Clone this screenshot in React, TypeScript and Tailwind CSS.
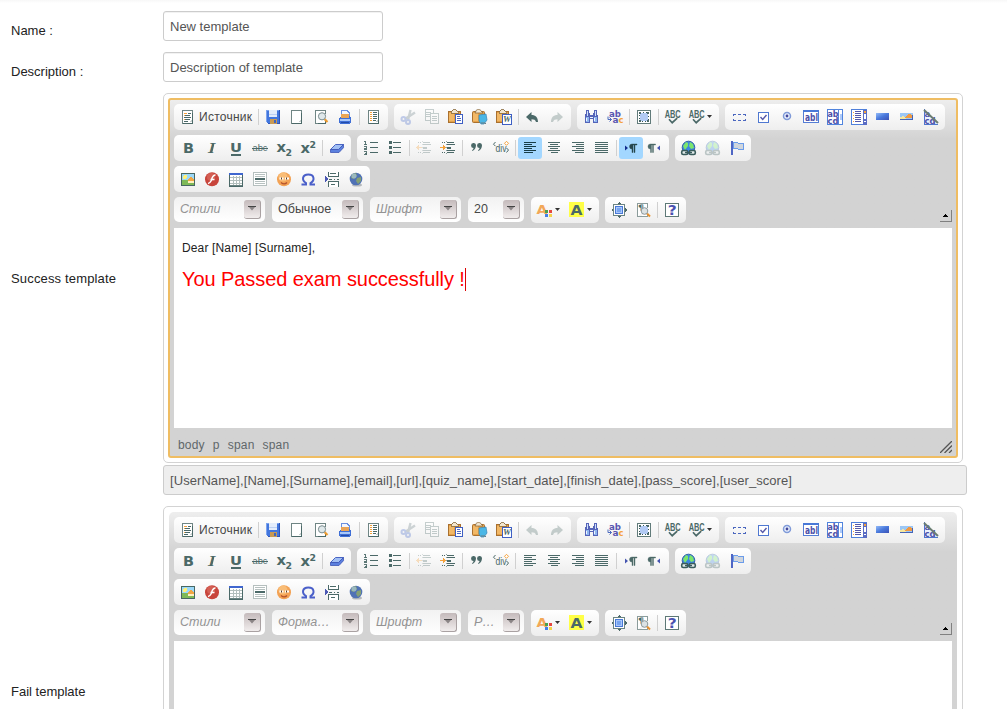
import React from "react";

const D = "#4b6968";
const O = "#f5a23c";

type IconProps = { children: React.ReactNode; dim?: boolean; smooth?: boolean };

function Ico({ children, dim, smooth }: IconProps) {
  return (
    <svg
      viewBox="0 0 16 16"
      className={"block size-4 shrink-0 overflow-visible " + (dim ? "opacity-30" : "")}
      shapeRendering={smooth ? "auto" : "crispEdges"}
    >
      {children}
    </svg>
  );
}

function Glyph({ x, y, size, color = D, italic, weight = 700, font = "DejaVu Sans, sans-serif", len, children }: {
  x: number; y: number; size: number; color?: string; italic?: boolean; weight?: number; font?: string; len?: number; children: string;
}) {
  return (
    <text x={x} y={y} fontSize={size} fill={color} fontWeight={weight} fontStyle={italic ? "italic" : "normal"} fontFamily={font} textLength={len} lengthAdjust="spacingAndGlyphs">
      {children}
    </text>
  );
}

const Page = () => (
  <>
    <rect x="2.500" y="1.500" width="10" height="13" fill="#fff" stroke="#6f8584" />
    <path d="M12.500 4v11M3 14.500h10" stroke={D} fill="none" />
    <path d="M9 13l3-3v3z" fill="#c8d0cf" />
  </>
);
const SourceIcon = () => (
  <Ico>
    <Page />
    <path d="M4 4.500h3" stroke={O} />
    <path d="M5 6.500h5M4 8.500h7M5 10.500h5M4 12.500h4M8 4.500h3" stroke={D} />
    <path d="M4 10.500h1M4 6.500h1" stroke={O} />
  </Ico>
);
const SaveIcon = () => (
  <Ico>
    <path d="M1 1h14v14H3l-2-2z" fill="#4276dd" />
    <path d="M1.500 1v12M2 1.500h12" stroke="#7ba3ee" />
    <path d="M14.500 1v14M3 14.500h12" stroke="#2f56ba" />
    <rect x="4" y="1" width="8" height="7" fill="#e4edfb" />
    <path d="M4 5.500h8" stroke="#bcd0f3" />
    <rect x="5" y="10" width="7" height="5" fill="#c99a54" />
    <rect x="9" y="11" width="2" height="3" fill="#3f65c0" />
  </Ico>
);
const NewIcon = () => <Ico><Page /></Ico>;
const PreviewIcon = () => (
  <Ico smooth>
    <path d="M12.500 5V1.500H2.500v13h10" fill="#fff" stroke="#6f8584" shapeRendering="crispEdges" />
    <path d="M5 14.500h7.500V12" fill="none" stroke={D} shapeRendering="crispEdges" />
    <path d="M11.500 10l3 3" stroke="#ee9b2e" strokeWidth="2.200" />
    <circle cx="9" cy="7.300" r="3.600" fill="#dfe8ea" stroke="#7b8d8f" />
  </Ico>
);
const PrintIcon = () => (
  <Ico>
    <path d="M5 1.500h5l2 2v5H4z" fill="#f4f7ff" stroke="#6a90e0" />
    <path d="M4 5h8v4H4z" fill="#e9a456" />
    <path d="M2 9l2-2v2h8V7l2 2v4l-1 2H3l-1-2z" fill="#3f6fd6" />
    <rect x="3" y="10" width="10" height="2" fill="#a9c8fa" />
    <rect x="4" y="13" width="8" height="1" fill="#244ca8" />
  </Ico>
);
const TemplatesIcon = () => (
  <Ico>
    <Page />
    <path d="M7 3.500h4M7 5.500h4M7 7.500h4M7 9.500h4M7 11.500h3" stroke={D} />
    <path d="M4.500 3v10" stroke={O} strokeDasharray="1 1" strokeWidth="2" />
  </Ico>
);
const CutIcon = () => (
  <Ico dim smooth>
    <path d="M10.500 1L8 11M15 3.500L5 10" stroke="#687d83" strokeWidth="2.400" />
    <circle cx="3.500" cy="10" r="2" fill="none" stroke="#4267c9" strokeWidth="2" />
    <circle cx="8" cy="13" r="2" fill="none" stroke="#4267c9" strokeWidth="2" />
  </Ico>
);
const CopyIcon = () => (
  <Ico dim>
    <rect x="1" y=".5" width="8" height="11" fill="#fff" stroke={D} />
    <path d="M2 3.500h5M2 5.500h4M2 7.500h4" stroke={D} />
    <rect x="6.500" y="4.500" width="8" height="10" fill="#fff" stroke={D} />
    <path d="M8 7.500h5M8 9.500h5M8 11.500h5" stroke={D} />
  </Ico>
);
const Clip = () => (
  <>
    <rect x=".5" y="2.500" width="12" height="11" rx="1" fill="#e3a048" stroke="#a9702f" />
    <path d="M1 4h5v8H1z" fill="#f2b866" />
    <path d="M4 2c0-2 5-2 5 0l2 2H3z" fill="#f3e6ce" stroke="#8a6a3c" strokeWidth=".8" />
  </>
);
const PasteIcon = () => (
  <Ico>
    <Clip />
    <rect x="7.500" y="5.500" width="7" height="9" fill="#fff" stroke="#3e5fc4" />
    <path d="M9 7.500h3M9 9.500h4M9 11.500h4" stroke="#4e69c2" />
  </Ico>
);
const PasteTextIcon = () => (
  <Ico smooth>
    <Clip />
    <path d="M7 6l7-1 1 6-3 4H9l-2-3z" fill="#4bb7e6" stroke="#3584b8" strokeWidth=".7" />
    <path d="M9 14h4l1 1" stroke="#6f7d80" fill="none" />
  </Ico>
);
const PasteWordIcon = () => (
  <Ico>
    <Clip />
    <rect x="6" y="5" width="9" height="10" fill="#fff" stroke="#3e5fc4" />
    <Glyph x={7} y={13} size={8.500} len={8} font="Liberation Serif, serif" italic>W</Glyph>
  </Ico>
);
const UndoIcon = ({ dim }: { dim?: boolean }) => (
  <Ico dim={dim} smooth>
    <path d="M1 8L6.500 3v3C10.500 6 13 8.500 13 13h-2c-.5-2-2-2.700-4.500-2.700V13z" fill={D} />
  </Ico>
);
const RedoIcon = () => (
  <Ico dim smooth>
    <path d="M14 8L8.500 3v3C4.500 6 2 8.500 2 13h2c.5-2 2-2.700 4.500-2.700V13z" fill={D} />
  </Ico>
);
const FindIcon = () => (
  <Ico>
    <path d="M3 1h3v3h1v2h3V4h1V1h3v3l1 3v7h-5v-4H7v4H2V7l1-3z" fill="#5564b9" />
    <path d="M3 8h3v5H3zM11 8h3v5h-3z" fill="#8fb6ef" />
    <path d="M4.500 2v5M12.500 2v5" stroke="#cfe0fb" />
    <path d="M3.500 9v3M11.500 9v3M7 8.500h3" stroke="#eef5ff" />
  </Ico>
);
const ReplaceIcon = () => (
  <Ico smooth>
    <Glyph x={2} y={7.500} size={9.500} color="#5a57b2" len={12}>ab</Glyph>
    <Glyph x={5.500} y={14.300} size={9} color="#5a57b2" len={6}>a</Glyph>
    <Glyph x={11.500} y={14.300} size={9} color={O} len={5}>c</Glyph>
    <path d="M1 7.500v3h3.500M2.500 8.500l2 2-2 2" stroke="#4a69bd" fill="none" />
  </Ico>
);
const SelectAllIcon = () => (
  <Ico>
    <rect x="1.500" y="1.500" width="13" height="13" fill="#fff" stroke="#617b7a" />
    <rect x="4" y="4" width="8" height="8" fill="#b2caf4" />
    <rect x="3.500" y="3.500" width="9" height="9" fill="none" stroke="#345455" strokeDasharray="1 2" />
    <path d="M3 3h2v2H3zM11 3h2v2h-2zM3 11h2v2H3zM11 11h2v2h-2z" fill={D} />
  </Ico>
);
const SpellIcon = () => (
  <Ico smooth>
    <Glyph x={-.3} y={8.800} size={10} len={16} font="Liberation Sans, sans-serif">ABC</Glyph>
    <path d="M4 10.200l3.200 3.500 5-4.500" stroke={D} strokeWidth="1.700" fill="none" />
  </Ico>
);
const FormIcon = () => (
  <Ico>
    <path d="M2 5.500h3M7 5.500h3M12 5.500h3M2 11.500h3M7 11.500h3M12 11.500h3M2.500 5v2M14.500 5v2M2.500 10v2M14.500 10v2" stroke="#4b67bf" />
  </Ico>
);
const CheckIcon = () => (
  <Ico>
    <rect x="3.500" y="3.500" width="10" height="10" fill="#fff" stroke="#4f78d1" />
    <path d="M5.500 8l2.200 2.500L11.500 6" stroke="#5558a8" strokeWidth="1.400" fill="none" shapeRendering="auto" />
  </Ico>
);
const RadioIcon = () => (
  <Ico smooth>
    <circle cx="8" cy="7" r="3.500" fill="#eaf1fd" stroke="#7f9ad8" strokeWidth="1.500" />
    <circle cx="8" cy="7" r="1.400" fill="#44499d" />
  </Ico>
);
const TextFieldIcon = () => (
  <Ico>
    <rect x=".5" y="2" width="15" height="11.500" fill="#fff" stroke="#547dd5" />
    <path d="M0 1.500h16M0 2.500h16" stroke="#4978d7" />
    <Glyph x={2} y={12} size={10} color="#4d50a9" len={13}>abl</Glyph>
  </Ico>
);
const TextAreaIcon = () => (
  <Ico>
    <rect x=".5" y=".5" width="15" height="15" fill="#fff" stroke="#5084de" />
    <path d="M11.500 0v16" stroke="#5b87d9" />
    <text fontSize="9" fill="#4d50a9" fontWeight="700" fontFamily="DejaVu Sans, sans-serif">
      <tspan x="0.500" y="8" textLength="11" lengthAdjust="spacingAndGlyphs">ab</tspan>
      <tspan x="0.500" y="15" textLength="11" lengthAdjust="spacingAndGlyphs">cd</tspan>
    </text>
    <path d="M13 5h2v6h-2z" fill="#aecaf8" />
  </Ico>
);
const SelectIcon = () => (
  <Ico>
    <rect x=".5" y=".5" width="15" height="15" fill="#fff" stroke="#4f7fda" />
    <path d="M2 3.500h1M2 6.500h1M2 9.500h1M2 12.500h1" stroke={O} />
    <path d="M4 2.500h6M4 4.500h6M4 6.500h6M4 8.500h6M4 10.500h6M4 12.500h6" stroke="#5458a8" />
    <rect x="12" y="1" width="4" height="15" fill="#5a6cc4" />
    <path d="M13 5h2v5h-2z" fill="#fff" />
    <path d="M13 2h2v2h-2z" fill={O} />
    <path d="M13 12h2v1h-2z" fill="#fff" />
  </Ico>
);
const ButtonIcon = () => (
  <Ico>
    <defs><linearGradient id="blueBar" x1="0" y1="0" x2="1" y2="1"><stop stopColor="#93bbf8" /><stop offset=".5" stopColor="#4979dc" /><stop offset="1" stopColor="#3d52b5" /></linearGradient></defs>
    <rect x="1" y="4" width="13" height="7" fill="url(#blueBar)" />
  </Ico>
);
const ImageButtonIcon = () => (
  <Ico>
    <rect x="1" y="4" width="13" height="7" fill="#9cc7f5" />
    <path d="M6 8l4-3 3 1v3H6z" fill="#f09a43" />
    <path d="M1 8l3-1 4 3H1z" fill="#f5e7a0" />
    <path d="M1 10.500h13M13.500 6v5" stroke="#4664b6" />
  </Ico>
);
const HiddenIcon = () => (
  <Ico>
    <path d="M1 1l14 14H1z" fill="#eaf1fd" />
    <text fontSize="8.500" fill="#4d50a9" fontWeight="700" fontFamily="DejaVu Sans, sans-serif">
      <tspan x="1.500" y="7.500">a</tspan>
      <tspan x="1.500" y="14.500">cd</tspan>
    </text>
    <path d="M1.500 0v15M1 15.500h14" stroke="#4e76cd" />
    <path d="M1 1l14 13" stroke="#6b7d71" strokeWidth="2" shapeRendering="auto" />
  </Ico>
);
const BoldIcon = () => <Ico><Glyph x={3} y={13} size={13.500} len={11}>B</Glyph></Ico>;
const ItalicIcon = () => <Ico><Glyph x={4} y={13} size={13.500} font="DejaVu Serif, serif" italic weight={400} len={7.500}>I</Glyph><path d="M9.500 4L7.500 12.500" stroke={D} strokeWidth="1.600" shapeRendering="auto" /></Ico>;
const UnderlineIcon = () => (
  <Ico><Glyph x={2} y={12} size={13} len={12}>U</Glyph><path d="M3 15h10" stroke={D} strokeWidth="2" /></Ico>
);
const StrikeIcon = () => (
  <Ico><Glyph x={.5} y={11} size={9.500} weight={400} font="Liberation Sans, sans-serif" len={15}>abc</Glyph><path d="M0 8.500h16" stroke={D} /></Ico>
);
const SubIcon = () => <Ico><Glyph x={.5} y={12} size={13.500} len={9.500}>x</Glyph><Glyph x={9.500} y={15.500} size={9} len={6.500}>2</Glyph></Ico>;
const SupIcon = () => <Ico><Glyph x={.5} y={13} size={13.500} len={9.500}>x</Glyph><Glyph x={9.500} y={8} size={8.500} len={6.500}>2</Glyph></Ico>;
const EraserIcon = () => (
  <Ico smooth>
    <path d="M6.500 4.500h8l-5 5h-8z" fill="#a1bff4" stroke="#4a65c4" />
    <path d="M1.500 9.500h8l5-5v3.200l-4.500 4.800H1.500z" fill="#5b80de" stroke="#3f57b5" strokeWidth=".8" />
  </Ico>
);
const NumListIcon = () => (
  <Ico>
    <path d="M7 2.500h8M7 7.500h8M7 12.500h8" stroke={D} />
    <path d="M1 1.500h1.500v3M1 4.500h3M1 6.500h2.500v1.500H1.500v1.500h2.500M1 11.500h2.500v3H1M2 13h1.500" stroke={D} strokeWidth=".9" fill="none" />
  </Ico>
);
const BulListIcon = () => (
  <Ico>
    <path d="M2 1h3v3H2zM2 6h3v3H2zM2 11h3v3H2z" fill={D} />
    <path d="M6 2.500h8M6 7.500h8M6 12.500h8" stroke={D} />
  </Ico>
);
const IndentLines = () => (
  <>
    <path d="M2 2.500h4M2 12.500h4" stroke={D} strokeDasharray="1 1" />
    <path d="M7 2.500h7M7 12.500h7M7 4.500h8M7 10.500h8" stroke={D} strokeWidth="1" />
    <path d="M7 7.500h4" stroke={D} strokeWidth="2" />
    <path d="M6.500 1v13" stroke="#91a4a2" strokeDasharray="1 2" />
  </>
);
const OutdentIcon = () => (
  <Ico dim><IndentLines /><path d="M0 7.500h6M1.500 6v3M2.500 5v5" stroke={O} /></Ico>
);
const IndentIcon = () => (
  <Ico><IndentLines /><path d="M0 7.500h6M4.500 6v3M3.500 5v5" stroke={O} /></Ico>
);
const QuoteIcon = () => (
  <Ico smooth>
    <path d="M7 5c0 3-1.300 5-3.500 6l-.5-.8c1-.7 1.500-1.400 1.500-2.200A2.500 2.500 0 1 1 7 5zM13 5c0 3-1.300 5-3.500 6l-.5-.8c1-.7 1.500-1.400 1.500-2.200A2.500 2.500 0 1 1 13 5z" fill={D} />
  </Ico>
);
const DivIcon = () => (
  <Ico smooth>
    <path d="M2.500 2L.5 4.200l2 2" stroke={D} fill="none" />
    <Glyph x={2.500} y={11.500} size={10.500} weight={400} font="Liberation Sans, sans-serif" len={11}>div</Glyph>
    <path d="M13.500 8l2 2-2 2.500" stroke={D} fill="none" />
    <path d="M13.500 1.300l2 2-2 2-2-2z" stroke={O} fill="#fff" />
  </Ico>
);
const JustLeft = ({ on }: { on?: boolean }) => (
  <Ico><path d="M2 2.500h12M2 4.500h8M2 6.500h12M2 8.500h8M2 10.500h12M2 12.500h9" stroke={on ? "#163c46" : D} /></Ico>
);
const JustCenter = () => <Ico><path d="M2 2.500h12M4 4.500h8M2 6.500h12M4 8.500h8M2 10.500h12M5 12.500h7" stroke={D} /></Ico>;
const JustRight = () => <Ico><path d="M2 2.500h12M6 4.500h8M2 6.500h12M6 8.500h8M2 10.500h12M5 12.500h9" stroke={D} /></Ico>;
const JustBlock = () => <Ico><path d="M1 2.500h13M1 4.500h13M1 6.500h13M1 8.500h13M1 10.500h13M1 12.500h13" stroke={D} /></Ico>;
const Pil = ({ x, color = D }: { x: number; color?: string }) => (
  <path transform={"translate(" + x + " 0)"} d="M7 5V4H2a2.300 2.300 0 0 0 0 5v3.500h1V5h1v7.500h1V5z" fill={color} stroke={color} strokeWidth=".4" />
);
const LtrIcon = ({ on }: { on?: boolean }) => (
  <Ico smooth><path d="M2 5.500l3 2.500-3 2.500z" fill={on ? "#142d8e" : "#4454b0"} /><Pil x={7} color={on ? "#27474f" : D} /></Ico>
);
const RtlIcon = () => <Ico smooth><path d="M13 5.500L10 8l3 2.500z" fill="#4454b0" /><Pil x={1.500} /></Ico>;
const LinkIcon = ({ dim }: { dim?: boolean }) => (
  <Ico dim={dim} smooth>
    <circle cx="7.500" cy="7.500" r="6.300" fill="#3d86df" stroke="#3062a6" />
    <path d="M2 6l3-4 2 1v3l-3 4zM9 2l3 2 1 4-3 1-2-3z" fill="#7ce66c" />
    <rect x=".7" y="10.500" width="6" height="4" rx="1.500" fill="#e1eaea" stroke="#3a5c5c" strokeWidth="1.600" />
    <rect x="8.300" y="10.500" width="6" height="4" rx="1.500" fill="#e1eaea" stroke="#3a5c5c" strokeWidth="1.600" />
    <path d="M4 12.500h7" stroke="#3a5c5c" strokeWidth="1.500" />
  </Ico>
);
const FlagIcon = () => (
  <Ico>
    <path d="M4 2.500h4l2 1h4.500v6H10l-2-1H4z" fill="#d0d6dd" stroke="#6b9cea" />
    <path d="M3 1v14" stroke="#4f66c4" strokeWidth="2" />
  </Ico>
);
const ImageIcon = () => (
  <Ico>
    <rect x="1.500" y="2.500" width="13" height="12" fill="#9bd8f8" stroke="#486763" />
    <rect x="2" y="9" width="12" height="5" fill="#7eb957" />
    <circle cx="5" cy="6" r="2" fill="#fff17a" />
    <path d="M8 9l3-4 3 4v3H8z" fill="#f2a744" />
    <path d="M8 10h6v2H8z" fill="#fff0c0" />
  </Ico>
);
const FlashIcon = () => (
  <Ico smooth>
    <circle cx="8" cy="8.300" r="7" fill="#c8453c" />
    <circle cx="7" cy="6" r="4" fill="#df7a6c" opacity=".5" />
    <path d="M11.500 4C8 4 8 8 7 10s-1.500 2.500-3 2.500M6.500 8.500h4" stroke="#fff" strokeWidth="1.500" fill="none" />
  </Ico>
);
const TableIcon = () => (
  <Ico>
    <rect x="1.500" y="2.500" width="13" height="12" fill="#fff" stroke="#6a8381" />
    <path d="M2 6.500h12M2 9.500h12M2 12.500h12M5.500 5v9M8.500 5v9M11.500 5v9" stroke="#b3bfbd" />
    <path d="M1 3h14" stroke="#3f66cf" strokeWidth="2" />
    <path d="M1.500 4v11h13V4" stroke={D} fill="none" />
  </Ico>
);
const HrIcon = () => (
  <Ico>
    <rect x="1.500" y="1.500" width="13" height="13" fill="#fff" stroke="#b5bfbe" />
    <path d="M3 3.500h10M3 5.500h10M3 10.500h10M3 12.500h10" stroke="#b7c1c0" />
    <path d="M3 8h10" stroke={D} strokeWidth="2" />
  </Ico>
);
const SmileyIcon = () => (
  <Ico smooth>
    <circle cx="8" cy="8.300" r="7" fill="#f3a254" />
    <circle cx="7" cy="6" r="4.500" fill="#f9bd77" />
    <path d="M3.500 6.500h4v2h-4zM9 6.500h4v2H9z" fill="#fff" />
    <path d="M5.500 6.500v2M10.500 6.500v2" stroke="#5d4023" />
    <path d="M5 11.500c2 1.800 4.500 1.800 6 0" fill="none" stroke="#b3532d" strokeWidth="1.200" />
  </Ico>
);
const OmegaIcon = () => (
  <Ico smooth>
    <path d="M1.500 13.500h4.500v-1.500C1.500 9.500 2 3.500 8.300 3.500S15 9.500 10.500 12v1.500H15" fill="none" stroke="#4a5fc9" strokeWidth="2" />
  </Ico>
);
const PageBreakIcon = () => (
  <Ico>
    <path d="M4.500 1v4.500h10V1M4.500 15.500v-5h10v5" fill="#fff" stroke={D} />
    <path d="M5 8.500h3M10 8.500h1M13 8.500h2M6 2.500h6M7 13.500h4" stroke={D} />
    <path d="M1 5l3 3-3 3z" fill="#4c59b4" />
  </Ico>
);
const GlobeIcon = () => (
  <Ico smooth>
    <ellipse cx="9" cy="14" rx="5" ry="1.500" fill="#b5b9bc" />
    <circle cx="8" cy="8" r="6.300" fill="#5072b5" />
    <path d="M4 3l4-1 1 3-3 3-3-1zM9 7l4-1v4l-3 3-2-3z" fill="#84a075" />
    <circle cx="6" cy="5" r="2.500" fill="#aac9ee" opacity=".6" />
  </Ico>
);
const TextColorIcon = () => (
  <Ico>
    <Glyph x={-.5} y={12} size={13} color="#f2a858" len={11}>A</Glyph>
    <path d="M8 8h3v3H8z" fill="#4ba04f" /><path d="M12 8h3v3h-3z" fill="#e64640" />
    <path d="M8 12h3v3H8z" fill="#427fe8" /><path d="M12 12h3v3h-3z" fill="#f3d24c" />
  </Ico>
);
const BgColorIcon = () => (
  <Ico><rect width="15" height="15" fill="#ffff47" /><Glyph x={1.500} y={13} size={13.500} len={12}>A</Glyph></Ico>
);
const MaximizeIcon = () => (
  <Ico>
    <rect x="2.500" y="2.500" width="11" height="11" fill="#fff" stroke="#6b8484" />
    <rect x="4.500" y="4.500" width="7" height="7" fill="#a9c8fb" stroke="#4879d5" />
    <path d="M6 6h4v4H6z" fill="#78a5f0" />
    <path d="M6 2l2-2 2 2zM6 14l2 2 2-2zM2 6L0 8l2 2zM14 6l2 2-2 2z" fill={D} />
  </Ico>
);
const BlocksIcon = () => (
  <Ico smooth>
    <path d="M2.500 14.500v-13h10v4M2.500 14.500h10V12" fill="#fff" stroke="#8b9c9b" shapeRendering="crispEdges" />
    <Glyph x={3} y={8} size={7.500} len={6}>¶</Glyph>
    <path d="M12 11.500l3 3" stroke="#e8902e" strokeWidth="2" />
    <circle cx="9.500" cy="9" r="3.300" fill="#dce2e4" stroke="#8d999c" />
  </Ico>
);
const AboutIcon = () => (
  <Ico>
    <rect x="1.500" y="1.500" width="13" height="13" fill="#fff" stroke="#5d7876" />
    <Glyph x={3.800} y={13} size={13.500} color="#4a51b0" len={9}>?</Glyph>
  </Ico>
);

function Btn({ children, on }: { children: React.ReactNode; on?: boolean }) {
  return <div className={"flex h-[22px] w-6 items-center justify-center rounded-[3px] " + (on ? "bg-[#a3d7ff]" : "")}>{children}</div>;
}
function MenuBtn({ children }: { children: React.ReactNode }) {
  return (
    <div className="flex h-[22px] w-8 items-center gap-[2px] pl-1">
      {children}
      <svg viewBox="0 0 5 3" className="mb-[2px] block h-[3px] w-[5px]"><path d="M0 0h5L2.500 3z" fill="#333" /></svg>
    </div>
  );
}
const Sep = () => <div className="mx-[2px] my-[3px] h-4 w-px bg-[#d0d0d0]" />;

function Group({ children }: { children: React.ReactNode }) {
  return <div className="flex h-[26px] items-center rounded-[5px] bg-linear-to-b from-white to-[#eeeeee] p-[2px]">{children}</div>;
}

function Combo({ label, chosen, small }: { label: string; chosen?: boolean; small?: boolean }) {
  return (
    <div className={"mr-[7px] flex h-[25px] items-start rounded-[5px] bg-linear-to-b from-[#f2f2f2] to-white " + (small ? "w-14" : "w-[91px]")}>
      <span className={"shrink-0 overflow-hidden whitespace-nowrap pl-1.5 text-[12.5px] leading-[25px] " + (small ? "w-[35px] " : "w-[70px] ") + (chosen ? "text-[#474747]" : "text-[#939393] italic")}>
        {label}
      </span>
      <div className="mt-[3px] flex h-[19px] w-[17px] items-center justify-center rounded-[3px] border-r border-b border-[#a9a1a2] bg-linear-to-b from-[#c4babb] to-[#f1eded]">
        <svg viewBox="0 0 8 5" className="mb-px h-[5px] w-2"><path d="M.5.5h7L4 4.500z" fill="#8a8485" /><path d="M0 .5h8" stroke="#444" /></svg>
      </div>
    </div>
  );
}

function Editor({ focused, format, size, height, path, children }: { focused?: boolean; format: string; size: string; height: string; path?: string[]; children?: React.ReactNode }) {
  return (
    <div className="w-[800px] rounded-[5px] border border-[#d3d3d3] bg-white p-[5px]">
      <div className={"bg-[#d3d3d3] bg-linear-to-b from-[#eeeeee] to-[#d3d3d3] to-[40px] px-[5px] pt-[5px] " + (focused ? "rounded-[2px] outline-2 -outline-offset-1 outline-[#efbd63]" : "rounded-[5px]")}>
        <div className="flex flex-col gap-[5px]">
          <div className="flex gap-1.5">
            <Group>
              <div className="flex h-[22px] w-20 items-center gap-[3px] pl-1">
                <SourceIcon />
                <span className="text-[12px] tracking-[0.25px] text-[#474747]">Источник</span>
              </div>
              <Sep />
              <Btn><SaveIcon /></Btn><Btn><NewIcon /></Btn><Btn><PreviewIcon /></Btn><Btn><PrintIcon /></Btn>
              <Sep />
              <Btn><TemplatesIcon /></Btn>
            </Group>
            <Group>
              <Btn><CutIcon /></Btn><Btn><CopyIcon /></Btn><Btn><PasteIcon /></Btn><Btn><PasteTextIcon /></Btn><Btn><PasteWordIcon /></Btn>
              <Sep />
              <Btn><UndoIcon dim={!focused} /></Btn><Btn><RedoIcon /></Btn>
            </Group>
            <Group>
              <Btn><FindIcon /></Btn><Btn><ReplaceIcon /></Btn>
              <Sep />
              <Btn><SelectAllIcon /></Btn>
              <Sep />
              <Btn><SpellIcon /></Btn><MenuBtn><SpellIcon /></MenuBtn>
            </Group>
            <Group>
              <Btn><FormIcon /></Btn><Btn><CheckIcon /></Btn><Btn><RadioIcon /></Btn><Btn><TextFieldIcon /></Btn><Btn><TextAreaIcon /></Btn>
              <Btn><SelectIcon /></Btn><Btn><ButtonIcon /></Btn><Btn><ImageButtonIcon /></Btn><Btn><HiddenIcon /></Btn>
            </Group>
          </div>
          <div className="flex gap-1.5">
            <Group>
              <Btn><BoldIcon /></Btn><Btn><ItalicIcon /></Btn><Btn><UnderlineIcon /></Btn><Btn><StrikeIcon /></Btn><Btn><SubIcon /></Btn><Btn><SupIcon /></Btn>
              <Sep />
              <Btn><EraserIcon /></Btn>
            </Group>
            <Group>
              <Btn><NumListIcon /></Btn><Btn><BulListIcon /></Btn>
              <Sep />
              <Btn><OutdentIcon /></Btn><Btn><IndentIcon /></Btn>
              <Sep />
              <Btn><QuoteIcon /></Btn><Btn><DivIcon /></Btn>
              <Sep />
              <Btn on={focused}><JustLeft on={focused} /></Btn><Btn><JustCenter /></Btn><Btn><JustRight /></Btn><Btn><JustBlock /></Btn>
              <Sep />
              <Btn on={focused}><LtrIcon on={focused} /></Btn><Btn><RtlIcon /></Btn>
            </Group>
            <Group>
              <Btn><LinkIcon /></Btn><Btn><LinkIcon dim /></Btn><Btn><FlagIcon /></Btn>
            </Group>
          </div>
          <div className="flex">
            <Group>
              <Btn><ImageIcon /></Btn><Btn><FlashIcon /></Btn><Btn><TableIcon /></Btn><Btn><HrIcon /></Btn>
              <Btn><SmileyIcon /></Btn><Btn><OmegaIcon /></Btn><Btn><PageBreakIcon /></Btn><Btn><GlobeIcon /></Btn>
            </Group>
          </div>
          <div className="flex h-[31px] items-start">
            <Combo label="Стили" />
            <Combo label={format} chosen={focused} />
            <Combo label="Шрифт" />
            <Combo label={size} chosen={focused} small />
            <div className="flex gap-1.5">
              <Group>
                <MenuBtn><TextColorIcon /></MenuBtn><MenuBtn><BgColorIcon /></MenuBtn>
              </Group>
              <Group>
                <Btn><MaximizeIcon /></Btn><Btn><BlocksIcon /></Btn>
                <Sep />
                <Btn><AboutIcon /></Btn>
              </Group>
            </div>
            <div className="mt-[13px] ml-auto flex h-3 w-3 items-center justify-center border-r border-b border-[#808080]">
              <svg viewBox="0 0 5 3" className="h-[3px] w-[5px]" shapeRendering="crispEdges"><path d="M2 0h1v1h1v1h1v1H0V2h1V1h1z" fill="#000" /></svg>
            </div>
          </div>
        </div>
        <div className={"bg-white px-2 " + height}>{children}</div>
        {path && (
          <div className="flex h-[29px] items-center justify-between pl-1 text-[12px] text-[#60676a]">
            <div className="flex gap-2 pt-1 tracking-[0.2px]">{path.map((tag, i) => <span key={i}>{tag}</span>)}</div>
            <svg viewBox="0 0 12 12" className="mt-2 size-3"><path d="M0 12L12 0M4.500 12L12 4.500M9 12l3-3" stroke="#555" strokeWidth="1.300" /></svg>
          </div>
        )}
      </div>
    </div>
  );
}

const Label = ({ children, className }: { children: string; className: string }) => (
  <div className={"w-[163px] shrink-0 pl-[11px] text-[13px] leading-5 text-[#222222] " + className}>{children}</div>
);
const Field = ({ value }: { value: string }) => (
  <div className="h-[30px] w-[220px] rounded-[3px] border border-[#cccccc] bg-white px-1.5 text-[13px] leading-[30px] text-[#555555] inset-shadow-2xs">{value}</div>
);

export default function App() {
  return (
    <div className="h-[709px] w-[1007px] overflow-hidden bg-white bg-linear-to-b from-[#f7f7f7] to-white to-[3px] font-['Liberation_Sans',Arial,sans-serif]">
      <div className="flex pt-[11px]">
        <Label className="pt-[10px]">Name :</Label>
        <Field value="New template" />
      </div>
      <div className="flex pt-[11px]">
        <Label className="pt-[10px]">Description :</Label>
        <Field value="Description of template" />
      </div>
      <div className="flex pt-[11px]">
        <Label className="pt-[176px] tracking-[0.16px]">Success template</Label>
        <div>
          <Editor focused format="Обычное" size="20" height="h-[200px]" path={["body", "p", "span", "span"]}>
            <p className="pt-[11px] text-[12px] leading-[18px] tracking-[0.14px] text-[#222222]">Dear [Name] [Surname],</p>
            <div className="flex items-center pt-2.5">
              <p className="text-[20px] leading-6 tracking-[-0.07px] text-[#ff0000]">You Passed exam successfully !</p>
              <span className="h-[23px] w-px bg-[#dd0000]" />
            </div>
          </Editor>
          <div className="mt-[2px] h-[30px] w-[804px] rounded-[3px] border border-[#cccccc] bg-[#eeeeee] px-1.5 text-[13px] leading-[30px] tracking-[0.067px] text-[#555555]">
            [UserName],[Name],[Surname],[email],[url],[quiz_name],[start_date],[finish_date],[pass_score],[user_score]
          </div>
        </div>
      </div>
      <div className="flex pt-[11px]">
        <Label className="pt-[176px]">Fail template</Label>
        <Editor format="Форма…" size="Р…" height="h-[200px]" />
      </div>
    </div>
  );
}
